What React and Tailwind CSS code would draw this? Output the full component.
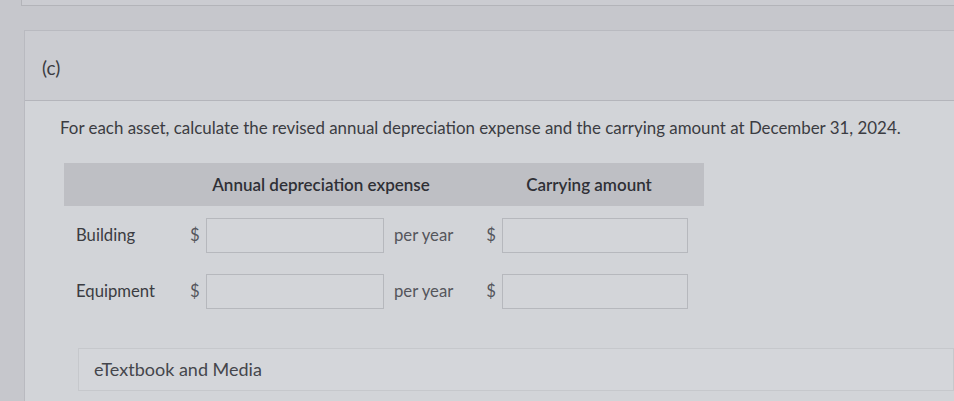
export default function App() {
  return (
    <div
      className="w-[954px] h-[401px] overflow-hidden bg-[#c6c7cc] text-[#3b3c42]"
      style={{ fontFamily: 'Lato, "Open Sans", sans-serif' }}
    >
      <div className="pl-[21px]">
        <div className="h-[6px] bg-[#cbccd1] border-l border-b border-[#b3b4b9]" />
      </div>

      <div className="mt-[24px] ml-[24px] border-l border-t border-[#b9bac0] bg-[#d0d1d6]">
        {/* header */}
        <div className="h-[70px] flex items-center pl-[17px] pt-[4px] border-b border-[#b4b5bb] bg-[#cbccd1]">
          <span className="text-[19px] leading-none">(c)</span>
        </div>

        {/* body */}
        <div className="bg-[#d2d4d8] pt-[17px] pl-[35px] h-[300px]">
          <p className="text-[16.9px] leading-[20px]">
            For each asset, calculate the revised annual depreciation expense and the carrying amount at December 31, 2024.
          </p>

          <div className="mt-[25px] ml-[4px] w-[640px]">
            <div className="grid grid-cols-[120px_22px_178px_82px_36px_186px_16px] h-[43px] items-center bg-[#bebfc4] text-[17px] font-semibold text-[#2f3036]">
              <div />
              <div className="col-span-3 text-center pr-[8px]">Annual depreciation expense</div>
              <div className="col-span-2 text-center pl-[24px]">Carrying amount</div>
              <div />
            </div>

            <Row label="Building" className="mt-[12px]" />
            <Row label="Equipment" className="mt-[21px]" />
          </div>

          <div className="mt-[39px] ml-[18px] h-[43px] flex items-center pl-[15px] border border-[#c6c8cc] bg-[#d4d6da] text-[18px] text-[#45464c]">
            eTextbook and Media
          </div>
        </div>
      </div>
    </div>
  )
}

function Row({ label, className }) {
  return (
    <div className={`grid grid-cols-[120px_22px_178px_82px_36px_186px_16px] h-[35px] items-center text-[16.7px] ${className}`}>
      <div className="pl-[12px]">{label}</div>
      <div className="pl-[6px] text-[#55565c]">$</div>
      <div className="h-[35px] border border-[#b6b8bd] bg-[#d3d5d9]" />
      <div className="pl-[10px] text-[#55565c]">per year</div>
      <div className="text-right pr-[6px] text-[#55565c]">$</div>
      <div className="h-[35px] border border-[#b6b8bd] bg-[#d3d5d9]" />
      <div />
    </div>
  )
}
